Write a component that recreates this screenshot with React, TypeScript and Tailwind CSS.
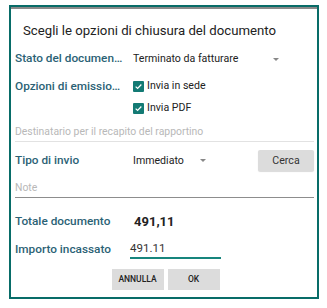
import { ChevronDown } from 'lucide-react'

function Check() {
  return (
    <span className="w-[11px] h-[11px] rounded-[1px] bg-[#137a74] flex items-center justify-center">
      <svg viewBox="0 0 12 12" className="w-[9px] h-[9px]">
        <path d="M2.2 6.2 L4.8 8.6 L9.8 3.4" fill="none" stroke="white" strokeWidth="1.7" />
      </svg>
    </span>
  )
}

function Caret() {
  return <span className="w-0 h-0 border-x-[3px] border-x-transparent border-t-[3px] border-t-[#888]" />
}

export default function App() {
  return (
    <div className="w-[327px] h-[308px] bg-white pt-[5px] pl-[9px]" style={{ fontFamily: 'Roboto, "Liberation Sans", sans-serif' }}>
      <div className="w-[310px] h-[294px] border-[2.5px] border-[#086c68] flex flex-col">
        <div className="h-[2px] bg-[#8a8a8a]" />
        {/* Title */}
        <div className="pl-[12px] pt-[13px] text-[13.2px] leading-[18px] text-[#222]">
          Scegli le opzioni di chiusura del documento
        </div>

        <div className="flex flex-col pl-[4px] pr-[3px] text-[11.8px]">
          {/* Stato */}
          <div className="flex items-center h-[16px] mt-[11px]">
            <span className="w-[118px] font-medium text-[#2b6275]">Stato del documen…</span>
            <span className="text-[10.6px] text-[#222] w-[140px]">Terminato da fatturare</span>
            <Caret />
          </div>

          {/* Opzioni */}
          <div className="flex items-start mt-[11px]">
            <span className="w-[118px] font-medium text-[#2b6275] leading-[16px]">Opzioni di emissio…</span>
            <div className="flex flex-col gap-[6px] text-[10.6px] text-[#222]">
              <label className="flex items-center gap-[3px] h-[16px]"><Check />Invia in sede</label>
              <label className="flex items-center gap-[3px] h-[16px]"><Check />Invia PDF</label>
            </div>
          </div>

          {/* Destinatario */}
          <div className="mt-[8px] h-[18px] border-b border-[#e2e2e2] text-[10.4px] text-[#b8b8b8] leading-[16px]">
            Destinatario per il recapito del rapportino
          </div>

          {/* Tipo di invio */}
          <div className="flex items-center h-[21px] mt-[8px]">
            <span className="w-[118px] font-medium text-[#2b6275]">Tipo di invio</span>
            <span className="text-[10.6px] text-[#222] w-[67px]">Immediato</span>
            <Caret />
            <button className="ml-auto w-[56px] h-[21px] bg-[#dcdcdc] rounded-[2px] text-[10.6px] text-[#333] shadow-[0_1px_1px_rgba(0,0,0,0.15)]">Cerca</button>
          </div>

          {/* Note */}
          <div className="mt-[9px] h-[18px] border-b border-[#8d8d8d] text-[10.4px] text-[#b8b8b8] leading-[16px]">
            Note
          </div>

          {/* Totale */}
          <div className="flex items-center h-[16px] mt-[16px]">
            <span className="w-[119px] font-medium text-[#2b6275]">Totale documento</span>
            <span className="text-[13px] font-bold text-[#222]">491,11</span>
          </div>

          {/* Importo */}
          <div className="flex items-center h-[16px] mt-[12px]">
            <span className="w-[115px] font-medium text-[#2b6275]">Importo incassato</span>
            <span className="w-[91px] text-[11.5px] text-[#333] border-b-2 border-[#17857d] pb-[1px] leading-[15px]">491.11</span>
          </div>

          {/* Buttons */}
          <div className="flex justify-center gap-[4px] mt-[11px] pl-[2px]">
            <button className="w-[52px] h-[21px] bg-[#dcdcdc] text-[8.5px] font-medium text-[#222]">ANNULLA</button>
            <button className="w-[52px] h-[21px] bg-[#dcdcdc] text-[8.5px] font-medium text-[#222]">OK</button>
          </div>
        </div>
      </div>
    </div>
  )
}
